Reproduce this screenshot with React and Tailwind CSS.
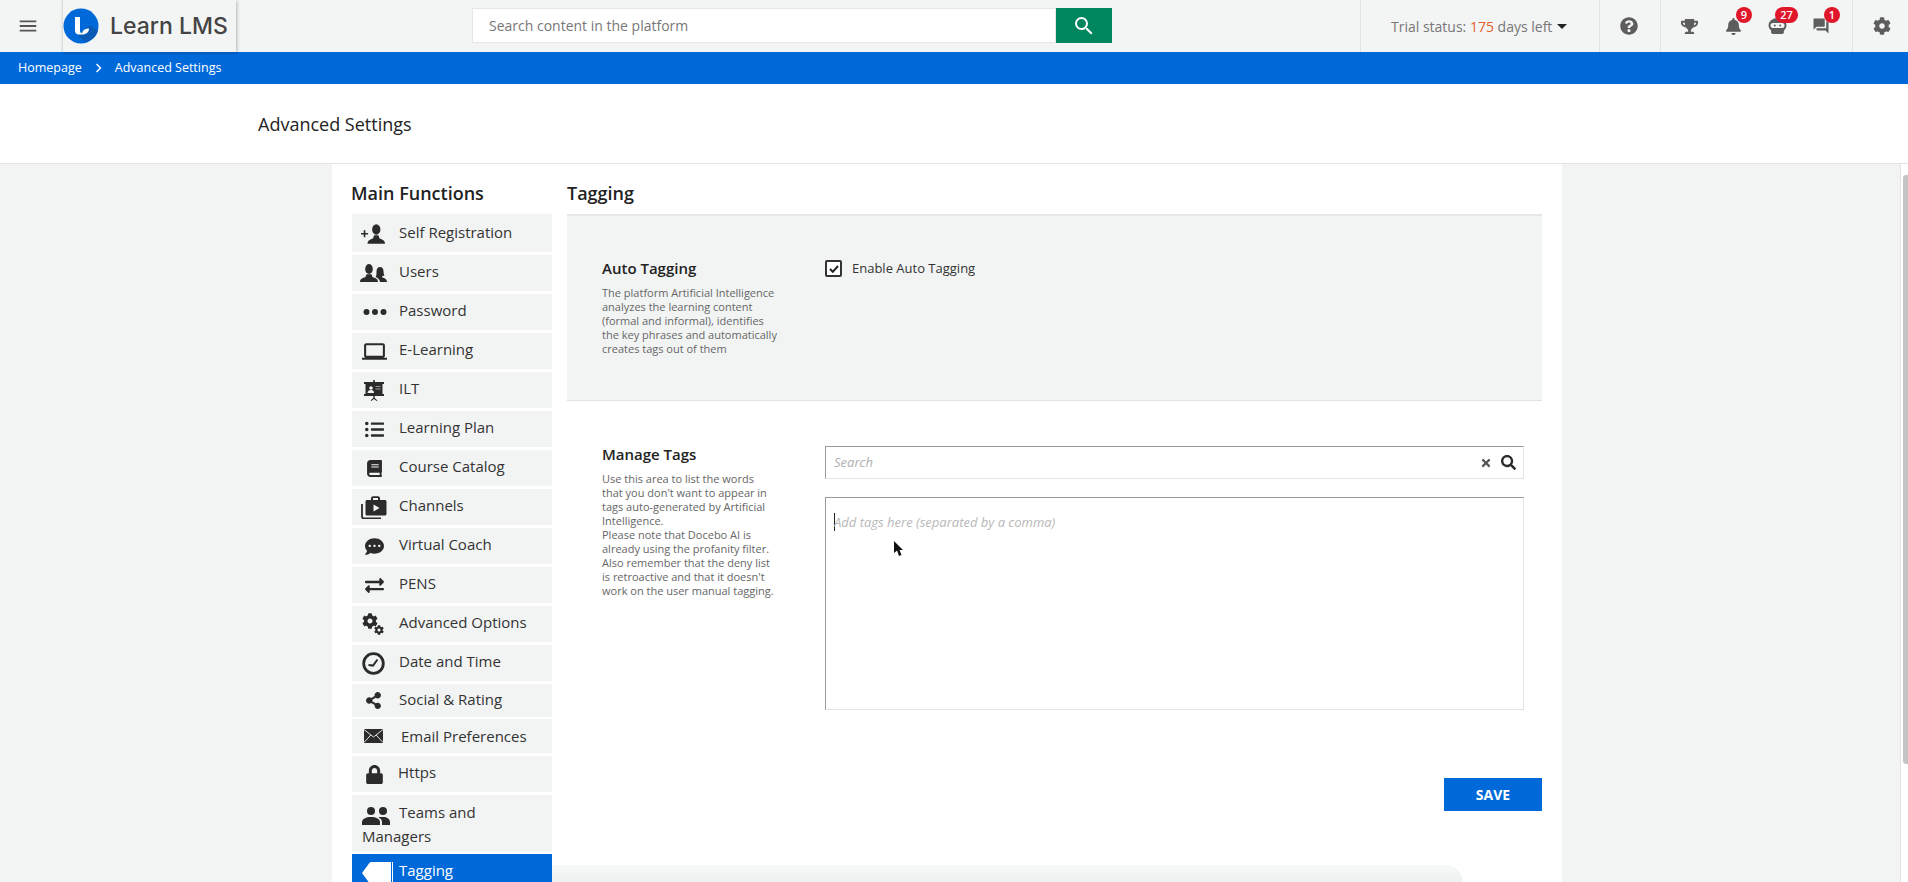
import React from "react";
import { MdMenu, MdSearch, MdLaptop, MdQuestionAnswer } from "react-icons/md";
import { FaQuestionCircle, FaTrophy, FaBell, FaCog, FaListUl, FaBook, FaCommentDots, FaExchangeAlt, FaShareAlt, FaLock, FaSearch, FaTimes } from "react-icons/fa";

const Ink = "#2b2b2b";

const SelfReg = () => (
  <svg width="24" height="20" viewBox="0 0 22 18" fill={Ink} className="ml-[-3px]">
    <path d="M0 8h2.500V5.500h1.500V8h2.500v1.500H4V12H2.500V9.500H0z" />
    <ellipse cx="14" cy="4.800" rx="3.800" ry="4.800" />
    <path d="M6 18c0-3 2.500-4 5-4.800l1-3h4l1 3c2.500.8 5 1.800 5 4.800z" />
  </svg>
);
const Users = () => (
  <svg width="28" height="18" viewBox="0 0 28 18" fill={Ink}>
    <ellipse cx="9" cy="5" rx="3.800" ry="5" />
    <path d="M0 18c0-3 2.500-4 5.500-5l1-2.800h5l1 2.800c3 1 5.500 2 5.500 5z" />
    <path d="M20 3c2.300 0 3.500 2 3.500 4 0 2 .5 3.500 1 4.500l-2.500.8.400 1.200c2.500.8 4.600 1.500 4.600 4.500h-7c-.2-2.500-2-4-4.500-5 1-1 1-2.800 1-5.500 0-2.500 1.300-4.500 3.500-4.500z" />
  </svg>
);
const Dots = () => (
  <svg width="24" height="8" viewBox="0 0 24 8" fill={Ink} className="ml-[2px]">
    <circle cx="3.500" cy="4" r="3" /><circle cx="12" cy="4" r="3" /><circle cx="20.500" cy="4" r="3" />
  </svg>
);
const Board = () => (
  <svg width="20" height="21" viewBox="0 0 20 21" fill={Ink}>
    <rect x="9.200" y="0" width="1.600" height="2" />
    <rect x="0" y="2" width="20" height="2" />
    <rect x="1.500" y="4" width="17" height="10" />
    <rect x="0" y="14" width="20" height="2" />
    <circle cx="7" cy="8" r="1.800" fill="#f2f4f4" />
    <path d="M3.500 13c0-2 1.500-3 3.500-3s3 1 3 3z" fill="#f2f4f4" />
    <rect x="11.500" y="6" width="5" height="1" fill="#9a9a9a" />
    <rect x="11.500" y="8.500" width="5" height="1" fill="#9a9a9a" />
    <path d="M9.300 16h1.400v2l2.800 2.400-.8.600-2.700-2-2.700 2-.8-.6 2.800-2.400z" />
  </svg>
);
const Channels = () => (
  <svg width="26" height="23" viewBox="0 0 26 23" fill={Ink}>
    <path d="M1 8v12.500c0 1.200.8 2 2 2h17" fill="none" stroke={Ink} strokeWidth="1.800" />
    <path d="M10 4V2.300C10 1 11 .2 12 .2h5c1 0 2 .8 2 2.100V4h5c.8 0 1.500.7 1.500 1.500V18c0 .8-.7 1.500-1.500 1.500H6c-.8 0-1.500-.7-1.500-1.500V5.500C4.500 4.700 5.200 4 6 4zm2 0h5V2h-5z" />
    <path d="M12.500 8.500v7l6-3.500z" fill="#f2f4f4" />
  </svg>
);
const Clock = () => (
  <svg width="23" height="23" viewBox="0 0 23 23" fill="none" stroke={Ink} className="ml-[-2px]">
    <circle cx="11.500" cy="11.500" r="9.800" strokeWidth="2.800" />
    <path d="M6.500 13l4.500.6L15.500 7.500" strokeWidth="2" />
  </svg>
);
const Mail = () => (
  <svg width="19" height="14" viewBox="0 0 19 14" fill={Ink} className="ml-[-2px]">
    <rect width="19" height="14" />
    <path d="M0 .5l9.500 7.500L19 .5M0 13.500l6.800-7.500M19 13.500L12.200 6" fill="none" stroke="#f7f7f7" strokeWidth=".9" />
  </svg>
);
const Teams = () => (
  <svg width="28" height="18" viewBox="0 0 28 18" fill={Ink}>
    <circle cx="9" cy="4" r="4" /><circle cx="21" cy="4" r="4" />
    <path d="M0 18v-3c0-3 4-5 9-5 5 0 9 2 9 5v3z" />
    <path d="M16.500 10.200c1-.2 3-.2 4.500-.2 4 0 7 2 7 5v3h-8v-3c0-2-1.500-3.600-3.500-4.800z" />
  </svg>
);
const Tag = () => (
  <svg width="32" height="22" viewBox="0 0 32 22" fill="white">
    <path d="M0 11L7 1.500C7.600.5 8.500 0 10 0h19v22H10c-1.500 0-2.400-.5-3-1.500z" />
    <rect x="30" y="0" width="1" height="22" />
  </svg>
);
const Cogs = () => (
  <span className="relative block w-[22px] h-[22px] ml-[-2px]">
    <FaCog size={16} color={Ink} className="absolute left-0 top-0" />
    <FaCog size={10} color={Ink} className="absolute right-0 bottom-0" />
  </span>
);
const Ninja = () => (
  <svg width="19" height="16" viewBox="0 0 19 16" fill="#5d5d5d">
    <ellipse cx="9.500" cy="7.500" rx="9" ry="7.500" />
    <rect x="3" y="12" width="13" height="4" rx="2" />
    <rect x="2.500" y="5" width="14" height="5" rx="2.500" fill="#f3f4f4" />
    <circle cx="6.800" cy="7.500" r="1" /><circle cx="12.200" cy="7.500" r="1" />
  </svg>
);

const rows = [
  ["Self Registration", <SelfReg />],
  ["Users", <Users />],
  ["Password", <Dots />],
  ["E-Learning", <MdLaptop size={25} color={Ink} />],
  ["ILT", <Board />],
  ["Learning Plan", <FaListUl size={19} color={Ink} />],
  ["Course Catalog", <FaBook size={17} color={Ink} />],
  ["Channels", <Channels />],
  ["Virtual Coach", <FaCommentDots size={19} color={Ink} />],
  ["PENS", <FaExchangeAlt size={19} color={Ink} />],
  ["Advanced Options", <Cogs />],
  ["Date and Time", <Clock />],
];

function Row({ label, icon, className = "h-[36px] mb-[3px]", textClass = "pb-[3px]" }) {
  return (
    <div className={`flex items-center bg-[#f2f4f4] ${className}`}>
      <span className="w-[44px] mr-[3px] flex justify-center items-center shrink-0">{icon}</span>
      <span className={textClass}>{label}</span>
    </div>
  );
}

function Badge({ children, className = "w-[16px]" }) {
  return (
    <span className={`absolute top-[7px] h-[16px] rounded-full bg-[#e0162b] text-white text-[11px] leading-[16px] font-semibold text-center ${className}`}>
      {children}
    </span>
  );
}

export default function App() {
  return (
    <div className="relative h-screen overflow-hidden bg-white text-[#333] font-['Open_Sans',sans-serif]">
      <header className="h-[52px] bg-[#f3f4f4] flex">
        <div className="w-[62px] flex items-center pl-[17px]"><MdMenu size={22} color="#555" /></div>
        <div className="w-[174px] flex items-center shadow-[1px_1px_3px_rgba(0,0,0,0.25)] border-l border-[#ddd] z-10">
          <svg width="36" height="36" viewBox="0 0 36 36">
            <circle cx="18" cy="18" r="17.500" fill="#0069d9" />
            <path d="M15 28L27 17l8 6a17.500 17.500 0 0 1-12 11z" fill="#0a59b5" />
            <path d="M12 9h5v14c0 1 .5 2 2 2v1.500h-3c-2.500 0-4-1.500-4-4z" fill="white" />
            <path d="M19 26.500c0-4 3-6 7-6 0 3.500-2.500 6-7 6z" fill="white" />
          </svg>
          <span className="ml-[11px] text-[23px] leading-none font-medium text-[#444] font-['Inter',sans-serif]">Learn LMS</span>
        </div>
        <div className="ml-[236px] mt-[8px] h-[35px] w-[640px] flex">
          <div className="flex-1 bg-white border border-[#e6e6e6] pl-[16px] flex items-center text-[14px] text-[#777]">Search content in the platform</div>
          <div className="w-[56px] bg-[#00865f] flex items-center justify-center"><MdSearch size={24} color="white" /></div>
        </div>
        <div className="flex-1" />
        <div className="w-[239px] border-l border-[#e3e3e3] flex items-center pl-[30px] text-[14px] text-[#777]">
          <span>Trial status: <span className="text-[#e5602b]">175</span> days left</span>
          <span className="ml-[5px] w-0 h-0 border-x-[5.500px] border-x-transparent border-t-[5.500px] border-t-[#222]" />
        </div>
        <div className="w-[61px] border-l border-[#e3e3e3] flex items-center justify-center pr-[2px]"><FaQuestionCircle size={18} color="#5d5d5d" /></div>
        <div className="w-[193px] border-l border-r border-[#e3e3e3] flex items-center pl-[6px]">
          <span className="relative w-[44px] flex justify-center"><FaTrophy size={17} color="#5d5d5d" /></span>
          <span className="relative w-[44px] h-full flex justify-center items-center"><FaBell size={17} color="#5d5d5d" /><Badge className="w-[16px] left-[25px]">9</Badge></span>
          <span className="relative w-[44px] h-full flex justify-center items-center"><Ninja /><Badge className="w-[23px] left-[20px]">27</Badge></span>
          <span className="relative w-[44px] h-full flex justify-center items-center"><MdQuestionAnswer size={18} color="#5d5d5d" /><Badge className="w-[16px] left-[25px]">1</Badge></span>
        </div>
        <div className="flex-1 max-w-[55px] flex items-center justify-center pl-[3px]"><FaCog size={18} color="#5d5d5d" /></div>
      </header>

      <nav className="h-[32px] bg-[#0069d9] flex items-center pl-[18px] text-[12.500px] text-white">
        <span>Homepage</span>
        <svg className="mx-[13px]" width="7" height="10" viewBox="0 0 7 10" fill="none" stroke="white" strokeWidth="1.400"><path d="M1.500 1l4 4-4 4" /></svg>
        <span>Advanced Settings</span>
      </nav>

      <div className="h-[80px] border-b border-[#e3e3e3] flex items-center pl-[258px] pt-[1px] text-[18px] text-[#222]">Advanced Settings</div>

      <div className="flex h-[718px]">
        <main className="flex-1 bg-[#f2f4f4] overflow-hidden">
          <div className="ml-[332px] w-[1230px] h-full bg-white px-[20px] flex gap-[15px]">
            <aside className="w-[200px] shrink-0 text-[15px]">
              <h2 className="h-[52px] pt-[17px] text-[18px] leading-[24px] font-semibold text-[#222] border-b-2 border-[#f2f4f4] indent-[-1px]">Main Functions</h2>
              {rows.map(([l, i]) => <Row key={l} label={l} icon={i} />)}
              <Row label="Social & Rating" icon={<FaShareAlt size={17} color={Ink} className="ml-[-1px]" />} className="h-[33px] mb-[2px]" />
              <Row label="Email Preferences" icon={<Mail />} className="h-[34px] mb-[3px]" textClass="ml-[2px]" />
              <Row label="Https" icon={<FaLock size={19} color={Ink} />} className="h-[36px] mb-[3px]" textClass="ml-[-1px] pb-[3px]" />
              <div className="h-[56px] mb-[3px] bg-[#f2f4f4] px-[10px] pt-[6px] leading-[22px]">
                <span className="inline-flex w-[37px] align-[-7px]"><Teams /></span>Teams and Managers
              </div>
              <div className="h-[36px] bg-[#0069d9] text-white flex items-start">
                <span className="pl-[10px] pt-[8px] w-[47px] shrink-0"><Tag /></span>
                <span className="pt-[5px]">Tagging</span>
              </div>
            </aside>

            <section className="w-[975px]">
              <h2 className="h-[52px] pt-[17px] text-[18px] leading-[24px] font-semibold text-[#222] border-b-2 border-[#e8e8e8]">Tagging</h2>
              <div className="h-[185px] bg-[#f2f4f4] border-b border-[#e3e3e3] flex">
                <div className="w-[258px] pl-[35px] pt-[41px]">
                  <h3 className="text-[15px] leading-[22px] font-semibold text-[#222]">Auto Tagging</h3>
                  <p className="mt-[7px] text-[11px] leading-[14px] text-[#666]">
                    The platform Artificial Intelligence<br />analyzes the learning content<br />(formal and informal), identifies<br />the key phrases and automatically<br />creates tags out of them
                  </p>
                </div>
                <div className="pt-[44px] flex items-start gap-[10px] text-[13px] leading-[17px]">
                  <span className="w-[17px] h-[17px] rounded-[2px] border-2 border-[#333] bg-white flex items-center justify-center">
                    <svg width="10" height="8" viewBox="0 0 10 8" fill="none" stroke="#222" strokeWidth="2"><path d="M1 4l2.800 2.800L9 1" /></svg>
                  </span>
                  <span>Enable Auto Tagging</span>
                </div>
              </div>
              <div className="flex">
                <div className="w-[258px] pl-[35px] pt-[42px]">
                  <h3 className="text-[15px] leading-[22px] font-semibold text-[#222]">Manage Tags</h3>
                  <p className="mt-[7px] text-[11px] leading-[14px] text-[#666]">
                    Use this area to list the words<br />that you don't want to appear in<br />tags auto-generated by Artificial<br />Intelligence.<br />Please note that Docebo AI is<br />already using the profanity filter.<br />Also remember that the deny list<br />is retroactive and that it doesn't<br />work on the user manual tagging.
                  </p>
                </div>
                <div className="pt-[45px] w-[699px]">
                  <div className="h-[33px] border border-[#e3e3e3] border-t-[#999] border-l-[#999] flex items-center pl-[8px] pr-[7px] text-[13px] italic text-[#b0b0b0]">
                    <span className="flex-1">Search</span>
                    <FaTimes size={12} color="#555" />
                    <FaSearch size={15} color="#2b2b2b" className="ml-[9px]" />
                  </div>
                  <div className="mt-[18px] h-[213px] border border-[#e3e3e3] border-t-[#999] border-l-[#999] pt-[15px] pl-[8px] text-[13px] leading-[18px] italic text-[#b8b8b8] flex items-start">
                    <span className="w-px h-[18px] bg-[#222] mr-[-1px] shrink-0" />
                    <span>Add tags here (separated by a comma)</span>
                  </div>
                </div>
              </div>
              <div className="mt-[68px] flex justify-end">
                <button className="w-[98px] h-[33px] bg-[#0069d9] text-white text-[14px] font-bold">SAVE</button>
              </div>
            </section>
          </div>
        </main>
        <div className="w-[8px] bg-white border-l border-[#e3e3e3] pl-[2px] pt-[11px]">
          <div className="h-[589px] bg-[#c4c4c4] rounded-l-[3px]" />
        </div>
      </div>

      <svg className="absolute left-[893px] top-[541px]" width="11" height="16" viewBox="0 0 11 16" fill="#111"><path d="M1 0v12l3-2.500L6 15l2.500-1-2-5H10z" /></svg>
      <div className="absolute left-[552px] top-[865px] w-[911px] h-[17px] rounded-tr-[24px] bg-gradient-to-b from-[#f7f8f8] to-[#eff0f0]" />
    </div>
  );
}
